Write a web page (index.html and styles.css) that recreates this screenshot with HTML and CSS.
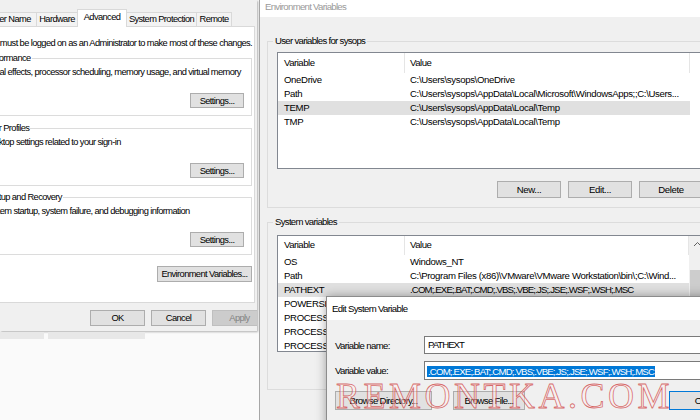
FILE: index.html
```html
<!DOCTYPE html>
<html>
<head>
<meta charset="utf-8">
<title>Environment Variables</title>
<link rel="stylesheet" href="styles.css">
</head>
<body>
<div class="desk">
  <div class="leftcol">
    <div class="sysprops">
      <div class="tabs">
        <div class="tab t-cn">Computer Name</div>
        <div class="tab t-hw">Hardware</div>
        <div class="tab t-adv sel">Advanced</div>
        <div class="tab t-sp">System Protection</div>
        <div class="tab t-rm">Remote</div>
      </div>
      <div class="panel">
        <p class="msg">You must be logged on as an Administrator to make most of these changes.</p>
        <fieldset class="gb">
          <legend>Performance</legend>
          <p class="gbtext">Visual effects, processor scheduling, memory usage, and virtual memory</p>
          <div class="gbbtns"><button class="btn set">Settings...</button></div>
        </fieldset>
        <fieldset class="gb">
          <legend>User Profiles</legend>
          <p class="gbtext">Desktop settings related to your sign-in</p>
          <div class="gbbtns"><button class="btn set">Settings...</button></div>
        </fieldset>
        <fieldset class="gb last">
          <legend>Startup and Recovery</legend>
          <p class="gbtext">System startup, system failure, and debugging information</p>
          <div class="gbbtns"><button class="btn set">Settings...</button></div>
        </fieldset>
        <div class="envrow"><button class="btn envbtn">Environment Variables...</button></div>
      </div>
      <div class="dlgbtns">
        <button class="btn">OK</button>
        <button class="btn">Cancel</button>
        <button class="btn dis">Apply</button>
      </div>
    </div>
    <div class="behind"><span class="strip s1"></span><span class="strip s2"></span></div>
  </div>

  <div class="envwin">
    <div class="etitle">Environment Variables</div>
    <div class="ebody">
      <fieldset class="egb userv">
        <legend>User variables for sysops</legend>
        <div class="list">
          <div class="lcontent">
            <div class="lhead"><span class="c1">Variable</span><span class="c2">Value</span><span class="c3"></span></div>
            <div class="row"><span class="c1">OneDrive</span><span class="c2">C:\Users\sysops\OneDrive</span></div>
            <div class="row"><span class="c1">Path</span><span class="c2">C:\Users\sysops\AppData\Local\Microsoft\WindowsApps;;C:\Users...</span></div>
            <div class="row sel"><span class="c1">TEMP</span><span class="c2">C:\Users\sysops\AppData\Local\Temp</span></div>
            <div class="row"><span class="c1">TMP</span><span class="c2">C:\Users\sysops\AppData\Local\Temp</span></div>
          </div>
        </div>
        <div class="ebtns">
          <button class="btn">New...</button>
          <button class="btn">Edit...</button>
          <button class="btn">Delete</button>
        </div>
      </fieldset>
      <fieldset class="egb sysv">
        <legend>System variables</legend>
        <div class="list withsb">
          <div class="lcontent">
            <div class="lhead"><span class="c1">Variable</span><span class="c2">Value</span></div>
            <div class="row"><span class="c1">OS</span><span class="c2">Windows_NT</span></div>
            <div class="row"><span class="c1">Path</span><span class="c2">C:\Program Files (x86)\VMware\VMware Workstation\bin\;C:\Wind...</span></div>
            <div class="row sel"><span class="c1">PATHEXT</span><span class="c2 caps">.COM;.EXE;.BAT;.CMD;.VBS;.VBE;.JS;.JSE;.WSF;.WSH;.MSC</span></div>
            <div class="row"><span class="c1">POWERSHELL_DISTRIBUTION_CHANNEL</span><span class="c2">MSI:Windows 10 Pro</span></div>
            <div class="row"><span class="c1">PROCESSOR_ARCHITECTURE</span><span class="c2">AMD64</span></div>
            <div class="row"><span class="c1">PROCESSOR_IDENTIFIER</span><span class="c2">Intel64 Family 6 Model 158 Stepping 10, GenuineIntel</span></div>
            <div class="row"><span class="c1">PROCESSOR_LEVEL</span><span class="c2">6</span></div>
          </div>
          <div class="vscroll">
            <div class="sbarrow"><svg width="17" height="17" viewBox="0 0 17 17"><polyline points="5,10 8.5,6.5 12,10" fill="none" stroke="#606060" stroke-width="1"/></svg></div>
            <div class="sbthumb"></div>
          </div>
        </div>
        <div class="ebtns">
          <button class="btn">New...</button>
          <button class="btn">Edit...</button>
          <button class="btn">Delete</button>
        </div>
      </fieldset>
    </div>
  </div>

  <div class="edit">
    <div class="edtitle">Edit System Variable</div>
    <div class="edbody">
      <div class="frow">
        <span class="flabel">Variable name:</span>
        <div class="finput caps">PATHEXT</div>
      </div>
      <div class="frow">
        <span class="flabel">Variable value:</span>
        <div class="finput val"><span class="hl caps">.COM;.EXE;.BAT;.CMD;.VBS;.VBE;.JS;.JSE;.WSF;.WSH;.MSC</span></div>
      </div>
      <div class="fbtns">
        <button class="btn bdir">Browse Directory...</button>
        <button class="btn bfile">Browse File...</button>
        <button class="btn bok">OK</button>
      </div>
    </div>
  </div>

  <div class="wm">REMONTKA.COM</div>
</div>
</body>
</html>
```
FILE: styles.css
```css
* { box-sizing: border-box; }
html, body { margin: 0; padding: 0; background: #fff; }
body {
  font-family: "Liberation Sans", Arial, sans-serif;
  color: #000;
}
.desk {
  position: relative;
  width: 700px;
  height: 420px;
  overflow: hidden;
  display: grid;
  grid-template-columns: 259px 441px;
}

/* ---------- System Properties (left) ---------- */
.leftcol {
  background: #fafafa;
  display: flex;
  flex-direction: column;
  min-width: 0;
}
.sysprops {
  width: 257px;
  height: 331px;
  flex: none;
  background: #f0f0f0;
  overflow: hidden;
  display: flex;
  flex-direction: column;
  font-size: 9.3px;
  letter-spacing: -0.6px;
  box-shadow: 1px 1px 2px rgba(0, 0, 0, 0.3);
}
.tabs {
  display: flex;
  align-items: flex-end;
  height: 17px;
  flex: none;
  margin-top: 9px;
  margin-left: -36px;
  position: relative;
  z-index: 1;
}
.tab {
  flex: none;
  height: 14px;
  line-height: 13px;
  border: 1px solid #d9d9d9;
  border-bottom: none;
  background: #f3f3f3;
  text-align: center;
  white-space: nowrap;
  margin-left: -1px;
}
.tab:first-child { margin-left: 0; }
.tab.sel {
  height: 18px;
  margin-bottom: -1px;
  background: #fff;
  line-height: 14px;
}
.t-cn { width: 73px; }
.t-hw { width: 42px; }
.t-adv { width: 50px; }
.t-sp { width: 71px; }
.t-rm { width: 36px; }

.panel {
  flex: none;
  margin-left: -30px;
  width: 285px;
  height: 277px;
  background: #fff;
  border: 1px solid #d9d9d9;
  padding: 10px 2px 0 7px;
}
.msg {
  margin: 0;
  padding-left: 6px;
  line-height: 12px;
  white-space: nowrap;
}
.gb {
  margin: 3px 0 0;
  padding: 0 7px 7px 6px;
  border: 1px solid #dcdcdc;
  min-width: 0;
}
.gb + .gb { margin-top: 6px; }
.gb.last { margin-top: 5px; }
.gb legend {
  padding: 0 1px;
  margin-left: -2px;
  line-height: 12px;
  white-space: nowrap;
}
.gbtext {
  margin: 2px 0 0 -1px;
  line-height: 12px;
  white-space: nowrap;
}
.gbbtns {
  display: flex;
  justify-content: flex-end;
  margin-top: 15px;
}
.btn {
  font: inherit;
  letter-spacing: inherit;
  color: #000;
  background: #e1e1e1;
  border: 1px solid #adadad;
  padding: 0;
  margin: 0;
  white-space: nowrap;
}
.set { width: 54px; height: 15px; }
.envrow {
  display: flex;
  justify-content: flex-end;
  margin-top: 11px;
}
.envbtn { width: 95px; height: 16px; }
.dlgbtns {
  display: flex;
  gap: 6px;
  padding: 7px 0 0 90px;
}
.dlgbtns .btn { width: 55px; height: 16px; flex: none; }
.btn.dis {
  background: #cccccc;
  border-color: #bfbfbf;
  color: #838383;
}
.behind {
  flex: 1;
  display: flex;
  align-items: flex-start;
  gap: 4px;
  padding-top: 1px;
}
.strip { height: 7px; background: #e8e8e8; }
.s1 { width: 44px; }
.s2 { width: 97px; }

/* ---------- Environment Variables ---------- */
.envwin {
  border-left: 1px solid #a6a6a6;
  background: #f0f0f0;
  overflow: hidden;
  display: flex;
  flex-direction: column;
  min-width: 0;
}
.etitle {
  height: 17px;
  flex: none;
  background: #fff;
  color: #9a9a9a;
  font-size: 9.6px;
  letter-spacing: -0.7px;
  line-height: 13px;
  padding-left: 5px;
  white-space: nowrap;
}
.ebody {
  flex: 1;
  min-height: 0;
  overflow: hidden;
  padding-left: 7px;
}
.egb {
  width: 460px;
  min-width: 0;
  margin: 18px 0 0;
  padding: 0 0 9px 9px;
  border: 1px solid #dcdcdc;
  font-size: 9.6px;
}
.egb legend {
  letter-spacing: -0.7px;
  line-height: 12px;
  padding: 0 2px;
  margin-left: -4px;
  white-space: nowrap;
}
.egb.sysv { margin-top: 8px; padding-bottom: 8px; }
.list {
  margin-top: 5px;
  width: 430px;
  height: 117px;
  border: 1px solid #828790;
  background: #fff;
  overflow: hidden;
  display: flex;
  letter-spacing: -0.35px;
}
.sysv .list { margin-top: 7px; }
.lcontent { flex: 1; min-width: 0; }
.lhead {
  display: flex;
  height: 20px;
  line-height: 19px;
  letter-spacing: -0.5px;
}
.sysv .lhead { height: 19px; line-height: 18px; }
.lhead .c1, .lhead .c2 { border-right: 1px solid #e5e5e5; }
.c1 {
  flex: none;
  width: 127px;
  padding-left: 6px;
  overflow: hidden;
  white-space: nowrap;
  text-overflow: ellipsis;
}
.c2 {
  flex: none;
  width: 285px;
  padding-left: 5px;
  overflow: hidden;
  white-space: nowrap;
}
.c2.caps { letter-spacing: -0.85px; }
.sysv .c2 { width: 284px; }
.c3 { flex: 1; }
.row {
  display: flex;
  height: 14px;
  line-height: 14px;
  width: 412px;
}
.sysv .row { width: 411px; }
.row.sel { background: #e0e0e0; }
.vscroll {
  flex: none;
  width: 17px;
  background: #f0f0f0;
  display: flex;
  flex-direction: column;
}
.sbarrow { height: 17px; }
.sbarrow svg { display: block; }
.sbthumb {
  margin: 17px 1px 0;
  height: 27px;
  background: #cdcdcd;
}
.ebtns {
  display: flex;
  gap: 7px;
  padding-left: 220px;
  margin-top: 12px;
  letter-spacing: -0.35px;
}
.ebtns .btn { width: 64px; height: 17px; flex: none; }

/* ---------- Edit System Variable dialog ---------- */
.edit {
  position: absolute;
  left: 326px;
  top: 296px;
  width: 420px;
  height: 140px;
  border: 1px solid #8c8c8c;
  background: #f0f0f0;
  box-shadow: 0 0 10px rgba(0, 0, 0, 0.35);
  font-size: 9.6px;
  letter-spacing: -0.65px;
}
.edtitle {
  height: 23px;
  background: #fff;
  line-height: 23px;
  padding-left: 5px;
  white-space: nowrap;
}
.edbody { padding: 16px 0 0 8px; }
.frow { display: flex; align-items: center; }
.frow + .frow { margin-top: 7px; }
.flabel { width: 89px; flex: none; white-space: nowrap; }
.finput {
  flex: none;
  width: 330px;
  height: 18px;
  background: #fff;
  border: 1px solid #7a7a7a;
  line-height: 16px;
  padding-left: 3px;
  white-space: nowrap;
  overflow: hidden;
}
.finput.caps { letter-spacing: -1px; }
.finput.val {
  height: 19px;
  padding-left: 2px;
  line-height: 17px;
}
.hl {
  display: inline-block;
  vertical-align: middle;
  background: #0078d7;
  color: #fff;
  line-height: 11px;
  padding: 0 1px;
}
.hl.caps { letter-spacing: -0.8px; }
.fbtns { display: flex; margin-top: 11px; }
.fbtns .btn { height: 19px; flex: none; }
.bdir { width: 97px; }
.bfile { width: 72px; margin-left: 21px; }
.bok { width: 64px; margin-left: 144px; border-color: #0078d7; }

/* ---------- watermark ---------- */
.wm {
  position: absolute;
  left: 336px;
  top: 378px;
  font-family: "Liberation Serif", "Times New Roman", serif;
  font-size: 36px;
  line-height: 36px;
  letter-spacing: 3.5px;
  color: rgba(255, 240, 240, 0.45);
  -webkit-text-stroke: 0.8px rgba(205, 60, 60, 0.75);
  white-space: nowrap;
  pointer-events: none;
}
```
